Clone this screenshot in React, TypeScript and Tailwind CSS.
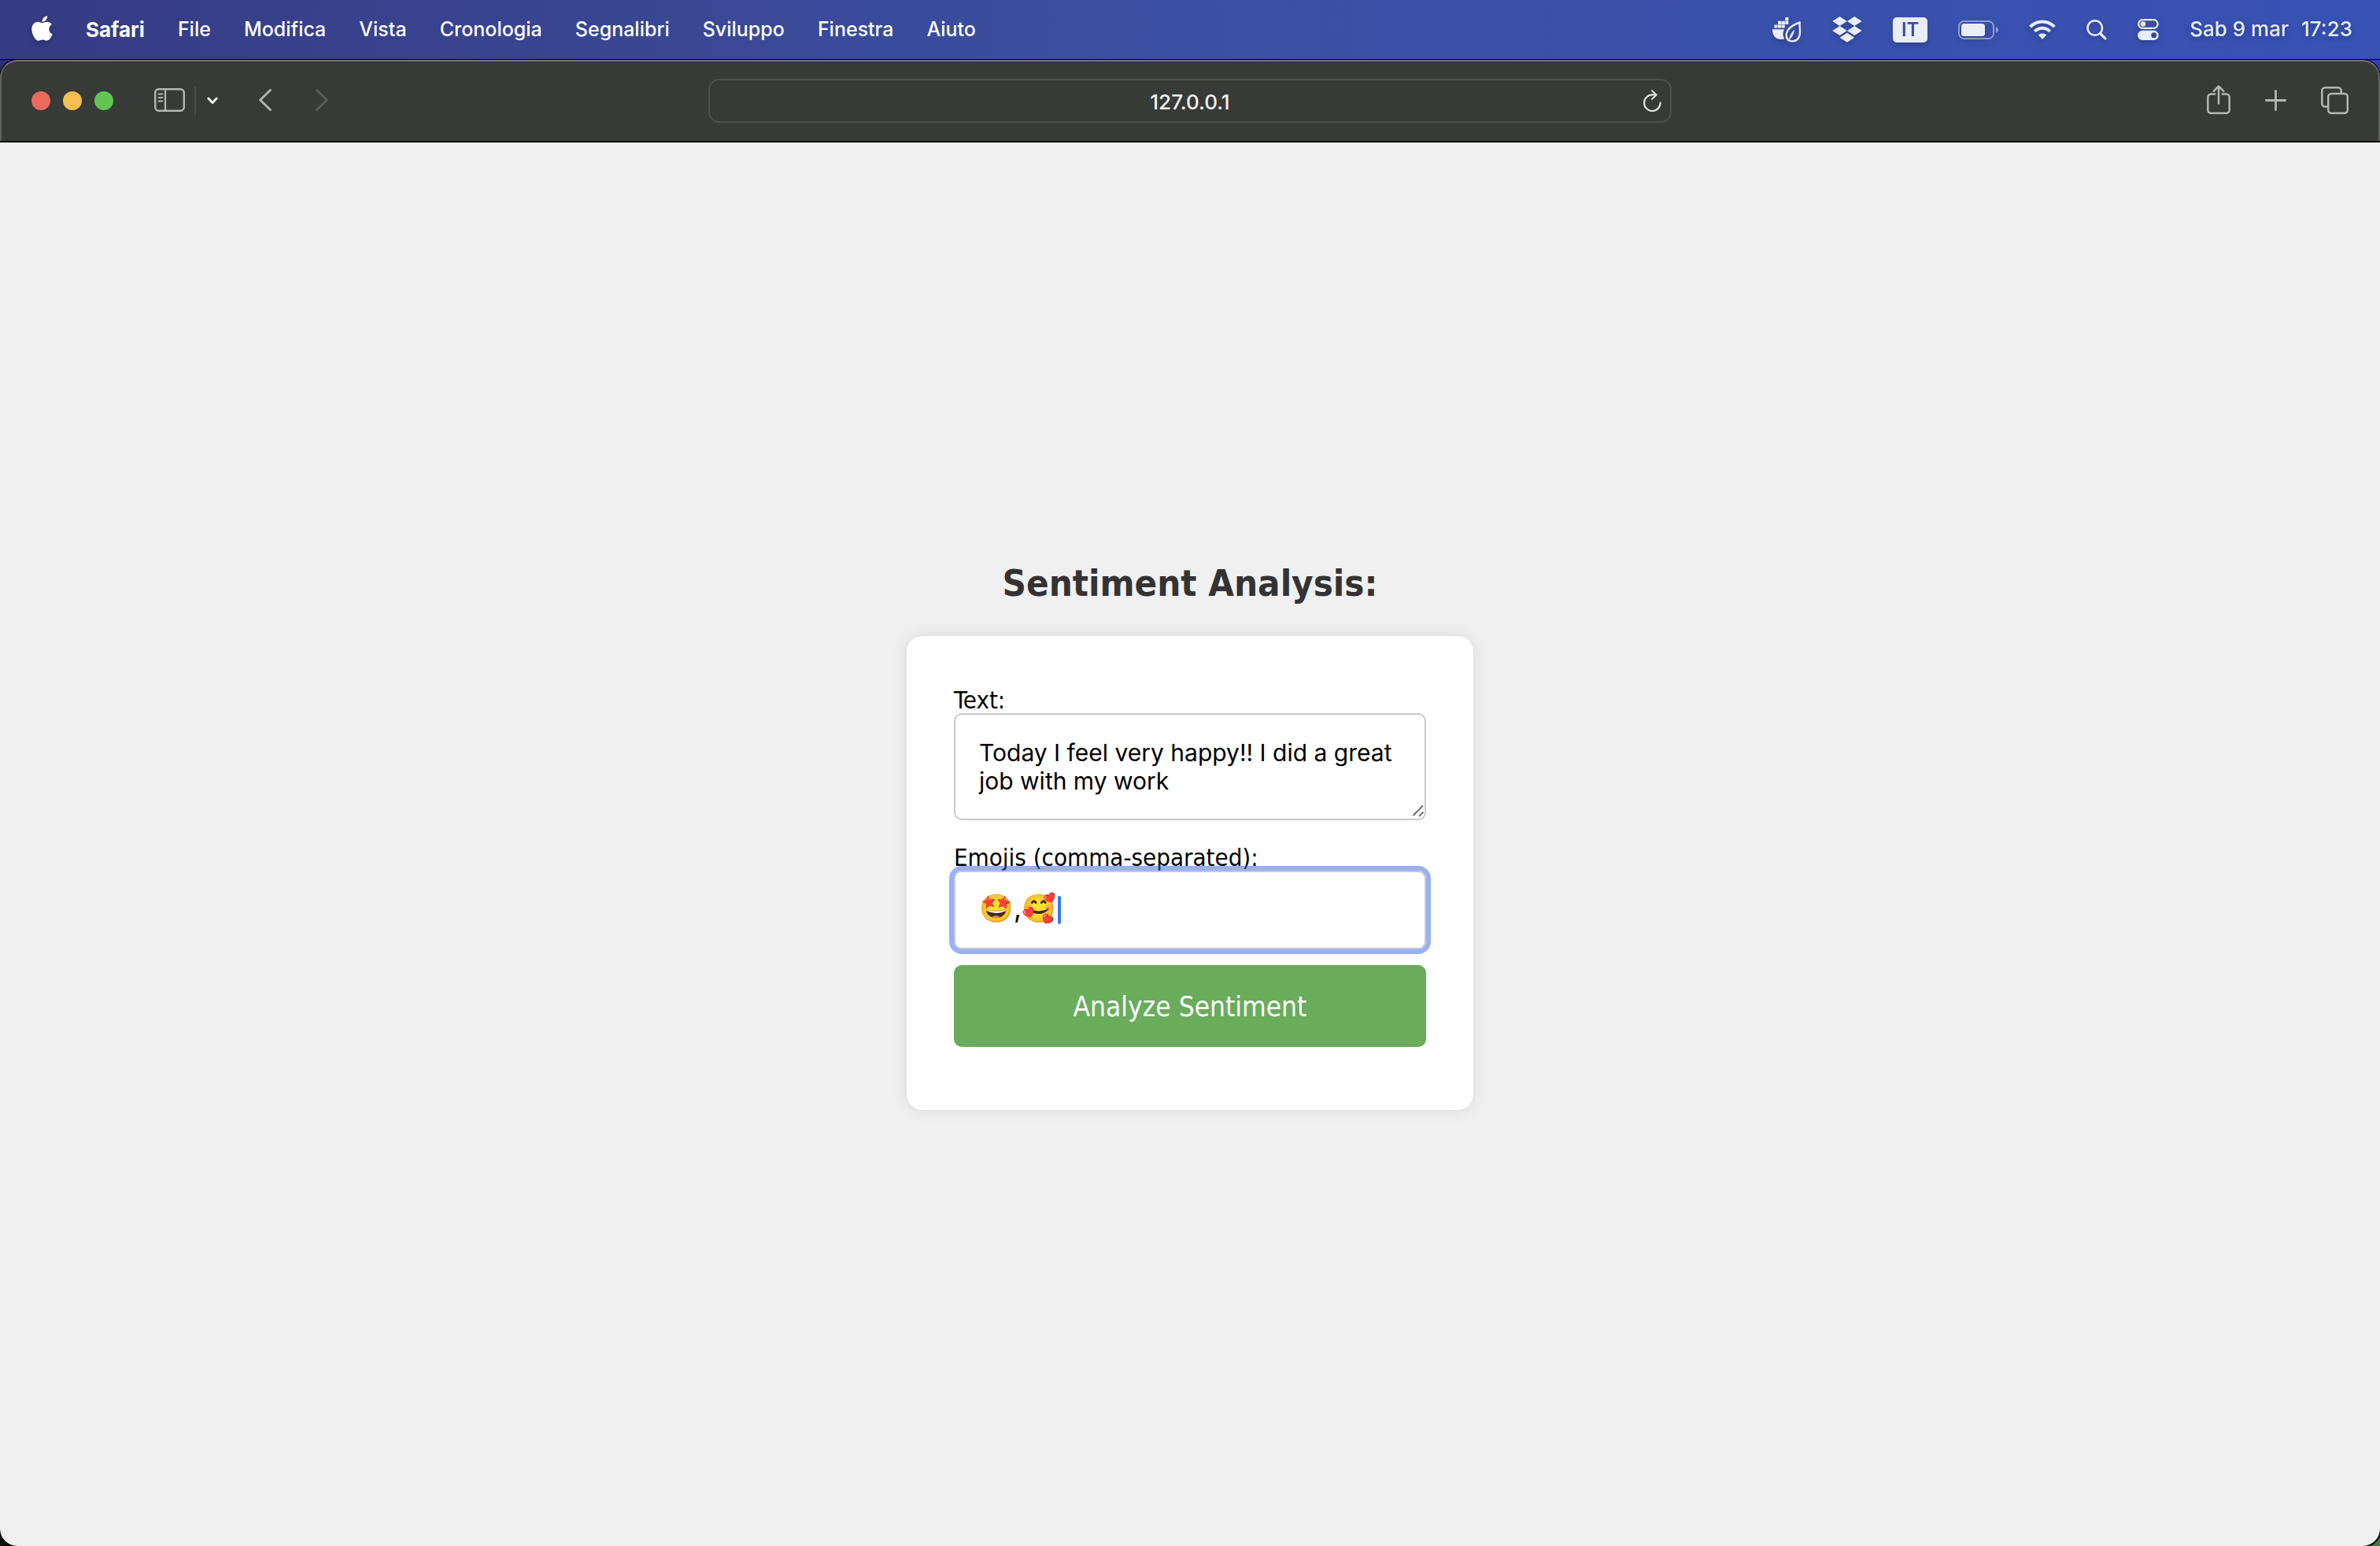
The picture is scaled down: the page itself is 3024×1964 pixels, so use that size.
import React from "react";
import { FaApple } from "react-icons/fa";

const MENUS = ["File", "Modifica", "Vista", "Cronologia", "Segnalibri", "Sviluppo", "Finestra", "Aiuto"];

function DockerLeafIcon() {
  return (
    <svg width="37" height="32" viewBox="0 0 37 32" fill="none" className="shrink-0">
      <g fill="currentColor">
        <path d="M16.2 0h4.2v4.2h-4.2zM7 4.8h4.2V9H7zM11.6 4.8h4.2V9h-4.2zM16.2 4.8h4.2V9h-4.2zM2.4 9.4h4.2v4.2H2.4zM7 9.4h4.2v4.2H7zM11.6 9.4h4.2v4.2h-4.2z" />
        <path d="M0 15.2h15c-2.2 4.2-2 8.4.3 12.4-3 .6-6.8.6-9.3-.5C2 25.2 0 20.6 0 15.2z" />
      </g>
      <path
        d="M34.8 6.5C33.8 13.5 37 20.5 33.4 26c-3.4 5-9.6 5.6-13.9 2.5C15 21.5 18.5 12 34.8 6.5z"
        stroke="currentColor"
        strokeWidth="2.4"
        strokeLinejoin="round"
      />
      <path d="M21.5 28c1-4.5 2.5-8 6-11.500-1 4.5-2.5 8.5-6 11.5z" fill="currentColor" stroke="currentColor" />
    </svg>
  );
}

function DropboxIcon() {
  return (
    <svg width="38" height="33" viewBox="0 0 38 33" fill="currentColor" className="shrink-0">
      <path d="M9.5 0l9.3 6-9.3 6-9.3-6zM28.3 0l9.3 6-9.3 6L19 6zM9.5 12l9.3 6-9.3 6-9.3-6zM28.3 12l9.3 6-9.3 6L19 18zM18.9 20.8l9.3 6-9.3 6-9.3-6z" />
    </svg>
  );
}

function BatteryIcon() {
  return (
    <svg width="51" height="24" viewBox="0 0 51 24" fill="none" className="shrink-0">
      <rect x="1" y="1" width="44" height="22" rx="6.5" stroke="currentColor" strokeOpacity="0.5" strokeWidth="2" />
      <rect x="4" y="4" width="30" height="16" rx="3.5" fill="currentColor" />
      <path d="M48 8c4 1.5 4 6.5 0 8z" fill="currentColor" fillOpacity="0.5" />
    </svg>
  );
}

function WifiIcon() {
  return (
    <svg width="34" height="25" viewBox="0 0 34 25" fill="none" className="shrink-0">
      <path d="M1.6 9.2C10.2.2 23.8.2 32.4 9.2" stroke="currentColor" strokeWidth="4" />
      <path d="M7.2 14.8c5.4-5.5 14.2-5.5 19.6 0" stroke="currentColor" strokeWidth="4" />
      <path d="M11.8 19.4c3-2.6 7.4-2.6 10.4 0L17 25z" fill="currentColor" />
    </svg>
  );
}

function SearchIcon() {
  return (
    <svg width="26" height="26" viewBox="0 0 26 26" fill="none" stroke="currentColor" strokeLinecap="round" className="shrink-0">
      <circle cx="10.8" cy="10.5" r="9.3" strokeWidth="2.6" />
      <path d="M17.5 17.5l6.4 6.4" strokeWidth="3.2" />
    </svg>
  );
}

function ControlCenterIcon() {
  return (
    <svg width="27" height="27" viewBox="0 0 27 27" fill="none" className="shrink-0">
      <rect x="1.1" y="1.1" width="24.6" height="10.8" rx="5.4" stroke="currentColor" strokeWidth="2.2" />
      <circle cx="7" cy="6.5" r="3.3" fill="currentColor" />
      <path
        fillRule="evenodd"
        fill="currentColor"
        d="M6.2 14.7h14.4a6.15 6.15 0 0 1 0 12.3H6.2a6.15 6.15 0 0 1 0-12.3zM20.7 17.3a3.5 3.5 0 1 0 0 7 3.5 3.5 0 0 0 0-7z"
      />
    </svg>
  );
}

function MenuBar() {
  return (
    <nav className="flex h-[75px] items-center justify-between bg-linear-to-r from-[#363b83] via-[#3c50a3] to-[#3751b5] pr-[35px] pl-10 text-[25px] text-white">
      <div className="flex items-center gap-[42px] [text-shadow:0_3px_6px_rgba(0,0,0,0.3)]">
        <button type="button" aria-label="Apple" className="pb-1 drop-shadow-[0_3px_3px_rgba(0,0,0,0.25)]">
          <FaApple className="h-9 w-[27px]" />
        </button>
        <button type="button" className="text-[26px] font-bold">Safari</button>
        {MENUS.map((m) => (
          <button type="button" key={m} className="font-medium">{m}</button>
        ))}
      </div>
      <div className="flex items-center gap-[39px] text-[#e9edf7] drop-shadow-[0_3px_3px_rgba(0,0,0,0.2)]">
        <button type="button" aria-label="Docker"><DockerLeafIcon /></button>
        <button type="button" aria-label="Dropbox"><DropboxIcon /></button>
        <button type="button" className="flex h-8 w-11 items-center justify-center rounded-[5px] bg-[#e9edf7] text-[24px] font-semibold text-[#37519f]">
          IT
        </button>
        <button type="button" aria-label="Batteria"><BatteryIcon /></button>
        <button type="button" aria-label="Wi-Fi"><WifiIcon /></button>
        <button type="button" aria-label="Cerca"><SearchIcon /></button>
        <button type="button" aria-label="Centro di Controllo"><ControlCenterIcon /></button>
        <button type="button" className="flex gap-4 pb-0.5 text-[26px] font-medium">
          <span>Sab 9 mar</span>
          <span>17:23</span>
        </button>
      </div>
    </nav>
  );
}

function Toolbar() {
  return (
    <div className="bg-linear-to-r from-[#2e2e66] to-[#3243b0]">
      <header className="grid h-[105px] grid-cols-[1fr_minmax(0,1224px)_1fr] items-center rounded-t-[22px] border-x-2 border-t-2 border-b border-x-[#626462] border-t-[#747474] border-b-black bg-[#383a38] px-[38px] pb-0.5 text-[#b4b6b4] shadow-[0_0_0_1px_#000]">
        <div className="flex items-center">
          <div className="flex gap-4">
            <button type="button" aria-label="Chiudi" className="size-6 rounded-full bg-[#ec6a5e]" />
            <button type="button" aria-label="Riduci" className="size-6 rounded-full bg-[#f4bf4f]" />
            <button type="button" aria-label="Ingrandisci" className="size-6 rounded-full bg-[#61c554]" />
          </div>
          <button type="button" aria-label="Barra laterale" className="ml-[52px] pb-0.5">
            <svg width="39" height="30" viewBox="0 0 39 30" fill="none" stroke="currentColor">
              <rect x="1.2" y="1.2" width="36.6" height="27.6" rx="4.5" strokeWidth="2.4" />
              <path d="M14 1v28" strokeWidth="2.2" />
              <path d="M5.5 7.5h5M5.5 12h5M5.5 16.5h5" strokeWidth="1.8" strokeLinecap="round" />
            </svg>
          </button>
          <div className="ml-3 h-9 w-0.5 bg-[#4b4d4b]" />
          <button type="button" aria-label="Gruppi di pannelli" className="ml-[14px] text-[#e6e7e6]">
            <svg width="14" height="10" viewBox="0 0 14 10" fill="none" stroke="currentColor" strokeWidth="3" strokeLinecap="round" strokeLinejoin="round">
              <path d="M1.8 2L7 7.6 12.2 2" />
            </svg>
          </button>
          <button type="button" aria-label="Indietro" className="ml-[52px] pb-0.5">
            <svg width="16" height="28" viewBox="0 0 16 28" fill="none" stroke="currentColor" strokeWidth="2.8" strokeLinecap="round" strokeLinejoin="round">
              <path d="M14.5 1.5L1.6 14l12.9 12.5" />
            </svg>
          </button>
          <button type="button" aria-label="Avanti" className="ml-14 pb-0.5 text-[#5c5e5c]">
            <svg width="16" height="28" viewBox="0 0 16 28" fill="none" stroke="currentColor" strokeWidth="2.8" strokeLinecap="round" strokeLinejoin="round">
              <path d="M1.5 1.5L14.4 14 1.5 26.5" />
            </svg>
          </button>
        </div>
        <div className="grid h-14 grid-cols-[1fr_auto_1fr] items-center rounded-[14px] border-2 border-[#4e504e] px-2.5">
          <input
            aria-label="Indirizzo"
            defaultValue="127.0.0.1"
            className="col-start-2 w-40 bg-transparent pt-0.5 text-center text-[26px] font-medium text-[#f2f2f2] outline-none"
          />
          <button type="button" aria-label="Ricarica" className="justify-self-end text-[#dfe0df]">
            <svg width="24" height="28" viewBox="0 0 24 28" fill="none" stroke="currentColor" strokeWidth="2.2" strokeLinecap="round" strokeLinejoin="round">
              <path d="M21.6 16.5A10.3 10.3 0 1 1 11.3 6.4h4.500" />
              <path d="M11 1.3l5.6 5.2-5.6 5.3" />
            </svg>
          </button>
        </div>
        <div className="flex items-center justify-end gap-11">
          <button type="button" aria-label="Condividi" className="pb-1">
            <svg width="30" height="37" viewBox="0 0 30 37" fill="none" stroke="currentColor" strokeWidth="2.5" strokeLinecap="round" strokeLinejoin="round">
              <path d="M10.3 11.5H5.3a4 4 0 0 0-4 4v16.2a4 4 0 0 0 4 4h19.4a4 4 0 0 0 4-4V15.5a4 4 0 0 0-4-4h-5" />
              <path d="M15 1.5v22M8.7 7.8L15 1.5l6.3 6.3" />
            </svg>
          </button>
          <button type="button" aria-label="Nuovo pannello" className="pb-0.5">
            <svg width="27" height="27" viewBox="0 0 27 27" fill="none" stroke="currentColor" strokeWidth="2.8" strokeLinecap="round">
              <path d="M13.5 1.4v24.2M1.4 13.5h24.200" />
            </svg>
          </button>
          <button type="button" aria-label="Panoramica pannelli" className="pb-0.5">
            <svg width="35" height="35" viewBox="0 0 35 35" fill="none" stroke="currentColor" strokeWidth="2.5">
              <rect x="9.2" y="9" width="24.6" height="24.7" rx="4" />
              <path d="M9 25.5H5.3a4 4 0 0 1-4-4V5.3a4 4 0 0 1 4-4h16.4a4 4 0 0 1 4 4V9" />
            </svg>
          </button>
        </div>
      </header>
    </div>
  );
}

function SentimentForm() {
  return (
    <form
      onSubmit={(e) => e.preventDefault()}
      className="flex w-full max-w-[720px] flex-col rounded-[20px] bg-white px-[60px] pt-16 pb-20 text-black shadow-[0_0_20px_rgba(0,0,0,0.1)]"
    >
      <label htmlFor="text" className="text-[31px] leading-[34px]">Text:</label>
      <div className="relative flex">
        <textarea
          id="text"
          rows={2}
          defaultValue="Today I feel very happy!! I did a great job with my work"
          className="w-full resize-none overflow-hidden rounded-[10px] border-2 border-[#c9c9c9] px-[30px] py-[30px] font-[Inter] text-[30px] leading-9 outline-none"
        />
        <svg width="16" height="16" viewBox="0 0 16 16" fill="none" stroke="#6a6a6a" strokeWidth="1.8" strokeLinecap="round" className="absolute right-0.5 bottom-1">
          <path d="M2 13.5L13.5 2M9.5 14.5l4.500-4.500" />
        </svg>
      </div>
      <label htmlFor="emojis" className="mt-[30px] text-[31px] leading-[34px]">Emojis (comma-separated):</label>
      <div className="relative flex">
        <input
          id="emojis"
          type="text"
          defaultValue="🤩,🥰"
          className="h-[100px] w-full rounded-[10px] border-2 border-[#c9c9c9] px-[30px] pb-1 font-[Inter] text-[35px] caret-transparent shadow-[0_0_0_6px_rgba(47,99,235,0.5)] outline-none"
        />
        <span className="absolute top-8 left-[132px] h-9 w-1 rounded-full bg-[#3478f6]" />
      </div>
      <button type="submit" className="mt-5 h-[104px] rounded-[10px] bg-[#69ac5c] pt-1 text-[35px] text-white">
        Analyze Sentiment
      </button>
    </form>
  );
}

export default function App() {
  return (
    <div className="flex min-h-screen flex-col font-[Inter,sans-serif]">
      <MenuBar />
      <div className="h-px bg-black" />
      <Toolbar />
      <div className="flex grow flex-col bg-linear-to-r from-[#06120a] to-[#3d7a40]">
        <main className="flex grow flex-col items-center justify-center rounded-b-[22px] bg-[#f0f0f0] pb-6 font-['DejaVu_Sans_Condensed','DejaVu_Sans',sans-serif] shadow-[0_0_0_2px_#000]">
          <h1 className="mb-[38px] text-[47px] leading-[58px] font-bold text-[#333]">Sentiment Analysis:</h1>
          <SentimentForm />
        </main>
      </div>
    </div>
  );
}
